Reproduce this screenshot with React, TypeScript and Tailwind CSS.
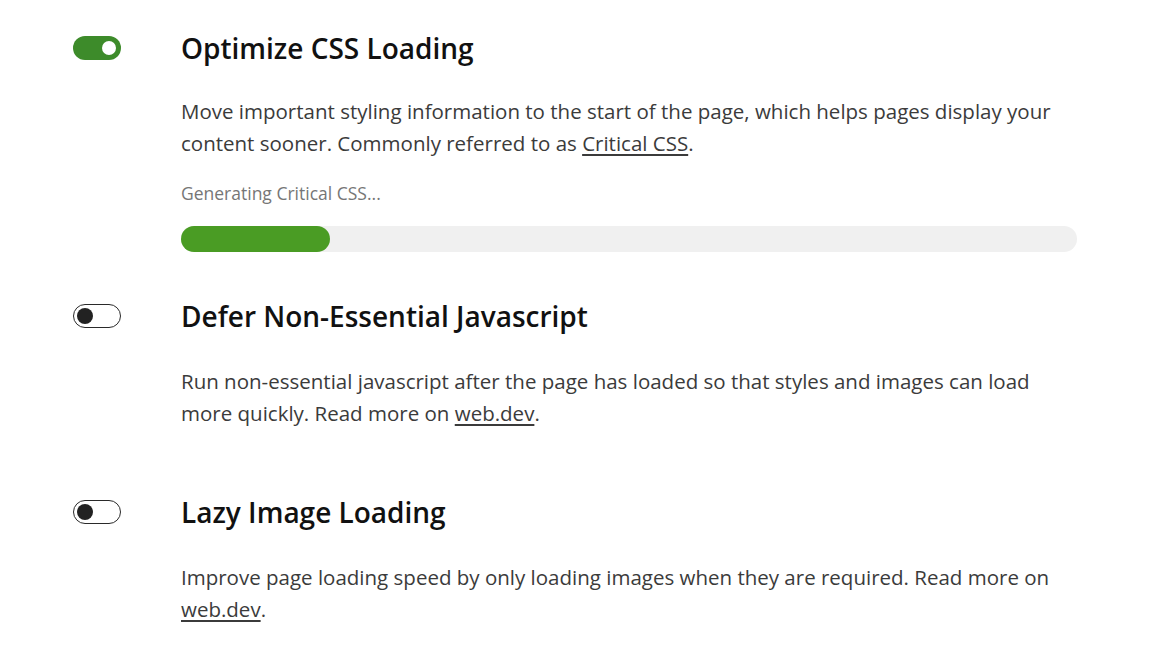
import React from "react";

function Toggle({ on }: { on: boolean }) {
  if (on) {
    return (
      <div className="w-[48px] h-[24px] rounded-full bg-[#3d8b2a] flex items-center justify-end pr-[5px] shrink-0">
        <div className="w-[14px] h-[14px] rounded-full bg-white" />
      </div>
    );
  }
  return (
    <div className="w-[48px] h-[24px] rounded-full border-[1.5px] border-[#2a2a2a] bg-white flex items-center pl-[3px] shrink-0">
      <div className="w-[16px] h-[16px] rounded-full bg-[#222222]" />
    </div>
  );
}

function Section({
  on,
  title,
  children,
}: {
  on: boolean;
  title: string;
  children: React.ReactNode;
}) {
  return (
    <div className="flex">
      <div className="w-[108px] shrink-0 h-[36px] flex items-center">
        <Toggle on={on} />
      </div>
      <div className="w-[896px]">
        <h2 className="text-[28px] leading-[36px] font-semibold text-[#111111]">{title}</h2>
        {children}
      </div>
    </div>
  );
}

export default function App() {
  return (
    <div
      className="bg-white w-[1167px] h-[664px] pl-[73px] pt-[30px]"
      style={{ fontFamily: '"Segoe UI", "Open Sans", "Noto Sans", sans-serif' }}
    >
      <Section on={true} title="Optimize CSS Loading">
        <p className="mt-[29px] text-[20.5px] leading-[32px] text-[#3b3b3b]">
          Move important styling information to the start of the page, which helps pages display your content sooner. Commonly referred to as{" "}
          <span className="underline underline-offset-[3px]">Critical CSS</span>.
        </p>
        <p className="mt-[22px] text-[17.5px] leading-[24px] text-[#767676]">Generating Critical CSS...</p>
        <div className="mt-[21px] h-[26px] rounded-full bg-[#f0f0f0] w-[896px]">
          <div className="h-[26px] w-[149px] rounded-full bg-[#4a9c24]" />
        </div>
      </Section>
      <div className="mt-[46px]">
        <Section on={false} title="Defer Non-Essential Javascript">
          <p className="mt-[31px] text-[20.5px] leading-[32px] text-[#3b3b3b]">
            Run non-essential javascript after the page has loaded so that styles and images can load more quickly. Read more on{" "}
            <span className="underline underline-offset-[3px]">web.dev</span>.
          </p>
        </Section>
      </div>
      <div className="mt-[65px]">
        <Section on={false} title="Lazy Image Loading">
          <p className="mt-[31px] text-[20.5px] leading-[32px] text-[#3b3b3b]">
            Improve page loading speed by only loading images when they are required. Read more on{" "}
            <span className="underline underline-offset-[3px]">web.dev</span>.
          </p>
        </Section>
      </div>
    </div>
  );
}
